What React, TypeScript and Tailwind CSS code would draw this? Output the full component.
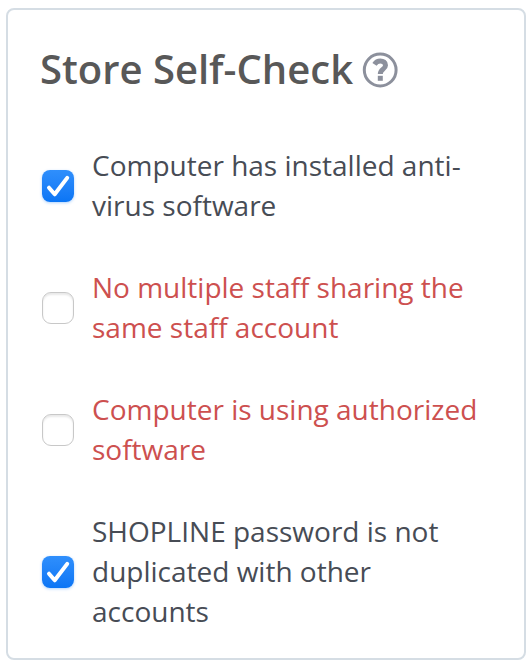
import * as React from 'react'
import {FunctionComponent} from 'react'

type CheckItemProps = {
  label: string
  checked: boolean
}

const items: CheckItemProps[] = [
  {label: 'Computer has installed anti-virus software', checked: true},
  {label: 'No multiple staff sharing the same staff account', checked: false},
  {label: 'Computer is using authorized software', checked: false},
  {
    label: 'SHOPLINE password is not duplicated with other accounts',
    checked: true,
  },
]

const Checkbox: FunctionComponent<{checked: boolean}> = ({checked}) =>
  checked ? (
    <span className="mt-0.5 flex size-8 shrink-0 rounded-lg bg-linear-to-b from-[#2f8ffc] to-[#0a75f5] shadow-[0_1px_3px_rgba(30,130,250,0.35)]">
      <svg viewBox="0 0 32 32" className="size-8" fill="none">
        <path
          d="M7 17.7 12.700 24.3 25.2 7.900"
          stroke="white"
          strokeWidth="4"
          strokeLinecap="round"
          strokeLinejoin="round"
        />
      </svg>
    </span>
  ) : (
    <span className="mt-0.5 size-8 shrink-0 rounded-[9px] border border-[#c8c8c8] bg-white shadow-[inset_0_2px_2px_rgba(0,0,0,0.09)]" />
  )

const CheckItem: FunctionComponent<CheckItemProps> = ({label, checked}) => (
  <li
    className={`flex items-center gap-[18px] ${
      checked ? 'text-[#474c55]' : 'text-[#cd504f]'
    }`}
  >
    <Checkbox checked={checked} />
    <span className="w-[392px] text-[28px] leading-10">{label}</span>
  </li>
)

const App: FunctionComponent = () => {
  return (
    <main className="h-[666px] w-[530px] bg-white pl-1.5 pt-2 font-['Open_Sans',sans-serif]">
      <section className="h-[652px] w-[520px] rounded-lg border-2 border-[#d5dde4] pl-8 pt-[31px]">
        <header className="flex items-center gap-[9px]">
          <h1 className="text-[40px] font-semibold leading-[56px] text-[#585858]">
            Store Self-Check
          </h1>
          <svg viewBox="0 0 36 36" className="mt-0.5 size-9" fill="none">
            <circle cx="18.2" cy="18" r="15.900" stroke="#8c909c" strokeWidth="3" />
            <path
              d="M12.500 12.300C14 10 15.800 9 18.300 9c3 0 5.200 1.500 5.200 4.200 0 4.200-5.200 3.800-5.200 8.800"
              stroke="#8c909c"
              strokeWidth="5"
            />
            <path d="M15.800 23.800h5v5h-5z" fill="#8c909c" />
          </svg>
        </header>
        <ul className="ml-0.5 mt-12 flex flex-col gap-[42px]">
          {items.map((item) => (
            <CheckItem key={item.label} {...item} />
          ))}
        </ul>
      </section>
    </main>
  )
}

export default App
